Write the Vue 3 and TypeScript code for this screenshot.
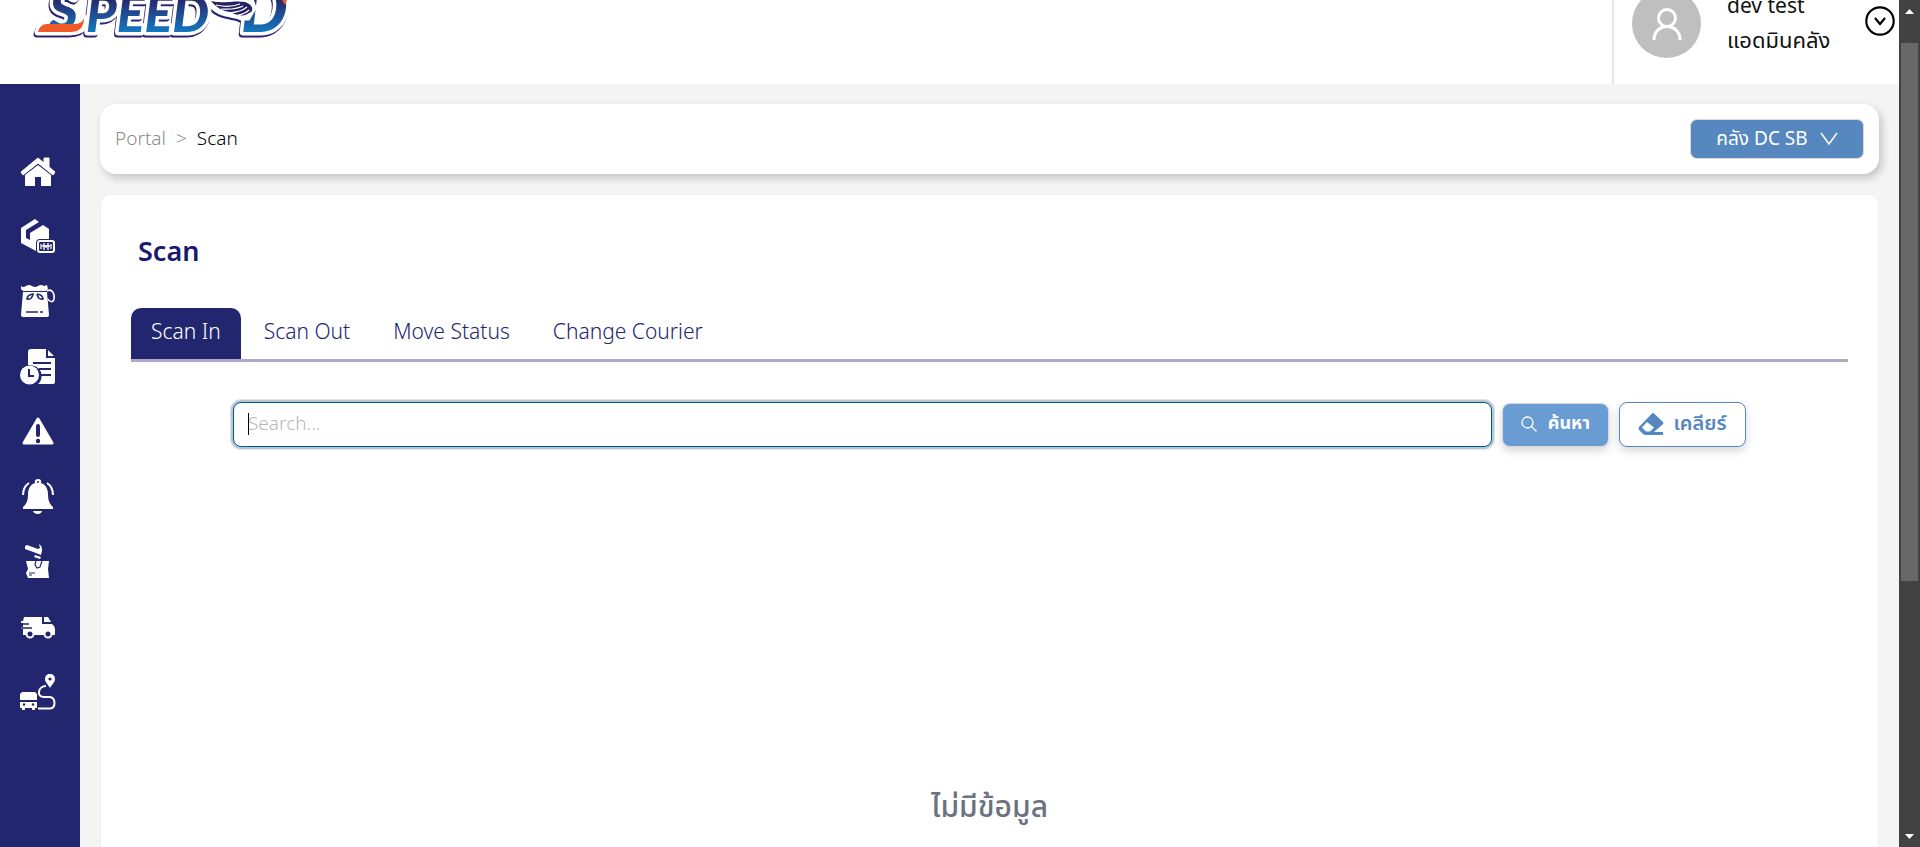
<script setup lang="ts">
import { onMounted, ref } from 'vue'

const tabs: string[] = ['Scan In', 'Scan Out', 'Move Status', 'Change Courier']
const activeTab = ref<string>('Scan In')
const keyword = ref<string>('')
const searchBox = ref<HTMLInputElement | null>(null)

const menu: string[] = ['home', 'parcel', 'bag', 'history', 'warning', 'bell', 'damaged', 'van', 'route']

function clearSearch(): void {
  keyword.value = ''
  searchBox.value?.focus()
}

onMounted(() => searchBox.value?.focus())
</script>

<template>
  <div class="window">
    <div class="page">
      <header class="header">
        <a href="#" class="logo" aria-label="Speed D">
          <svg width="270" height="84" viewBox="0 0 270 84">
            <defs>
              <linearGradient id="ink" gradientUnits="userSpaceOnUse" x1="0" y1="-4" x2="0" y2="32">
                <stop offset="0" stop-color="#262262" />
                <stop offset="0.45" stop-color="#21478f" />
                <stop offset="1" stop-color="#1279bf" />
              </linearGradient>
            </defs>
            <g class="logo-mark">
              <path d="M6 32Q8 24 15 24H42Q50 24 52 18L54 24Q50 32 38 32Z" fill="#fff" stroke="#fff" stroke-width="7" stroke-linejoin="round" />
              <text class="logo-word" y="32"><tspan class="logo-s" x="17" y="30">S</tspan><tspan x="54" y="32">PEED</tspan></text>
              <text class="logo-d" x="209" y="32">D</text>
              <path d="M178 2C184 17 205 14 209 18H216L222 8 218-4H176Z" fill="#fff" stroke="#fff" stroke-width="5" />
            </g>
            <path d="M6 32Q8 24 15 24H42Q50 24 52 18 52 32 38 32Z" fill="#f15a29" />
            <path d="M179 1C190 4 204 0 213 2 222 5 222 12 217 13 212 18 202 14 198 12 190 11 184 7 179 1Z" fill="#262262" />
            <path d="M184 5Q197 8 208 4M189 9Q203 10 211 6M197 13Q209 12 215 7M206 15Q213 14 217 10" fill="none" stroke="#fff" stroke-width="1.2" />
            <path d="M250 0H255L253 5Z" fill="#f15a29" />
          </svg>
        </a>
        <div class="profile">
          <span class="avatar">
            <svg width="34" height="34" viewBox="0 0 34 34" fill="none" stroke="#fff" stroke-width="3">
              <circle cx="17" cy="11" r="8.5" />
              <path d="M4 33C4 15 30 15 30 33" />
            </svg>
          </span>
          <div class="who">
            <div>dev test</div>
            <div class="role">แอดมินคลัง</div>
          </div>
          <button type="button" class="more" aria-label="Account menu">
            <svg width="30" height="30" viewBox="0 0 30 30" fill="none" stroke="#000" stroke-width="2.2">
              <circle cx="15" cy="15" r="13.7" />
              <path d="M10 12 15 18 20 12" />
            </svg>
          </button>
        </div>
      </header>

      <div class="body">
        <nav class="sidebar" aria-label="Main">
          <a v-for="item in menu" :key="item" href="#" :aria-label="item">
            <svg width="36" height="36" viewBox="0 0 36 36" fill="#fff">
              <g v-if="item === 'home'">
                <path d="M1 18 18 4 24 9V4H29V13L35 18 33 21 18 9 3 21Z" stroke="#fff" stroke-linejoin="round" />
                <path d="M5 21 18 11 31 21V32H21V23H15V32H5Z" />
              </g>
              <g v-else-if="item === 'parcel'">
                <path d="M1 9 15 0 19 3 6 11V19L10 21V14L23 6 29 10V20H20Q16 20 16 24V32L1 24Z" />
                <rect x="18" y="22" width="16" height="11" rx="2" fill="none" stroke="#fff" stroke-width="2" />
                <path d="M21 25V30M24 24V31M26 26V29M28 24V31M31 25V30M22 27H30" stroke="#fff" stroke-width="1.3" />
              </g>
              <g v-else-if="item === 'bag'">
                <path d="M1 2Q3 4 6 2 9 0 12 2 15 4 18 2 21 0 24 2L27 1 28 5 26 7H3L1 5ZM3 8H27L29 31Q29 33 26 33H3Q1 33 1 31Z" />
                <path d="M13 10Q7 11 7 15 12 16 13 10ZM17 10Q23 11 23 15 18 16 17 10M6 28H18M20 28H23" fill="none" stroke="#22266e" stroke-width="1.6" />
                <path d="M27 7C32 4 35 10 34 15 33 19 29 18 28 15" fill="none" stroke="#fff" stroke-width="1.5" />
              </g>
              <g v-else-if="item === 'history'">
                <path d="M11 0H26V9H35V33Q35 35 32 35H18Q23 31 21 23 18 16 8 16V3Q8 0 11 0ZM28 1 34 7H28Z" />
                <path d="M13 14H31M19 20H31M20 26H31" fill="none" stroke="#22266e" stroke-width="1.8" />
                <circle cx="9.500" cy="26" r="9.500" />
                <path d="M9 20V27H14" fill="none" stroke="#22266e" stroke-width="2" />
              </g>
              <g v-else-if="item === 'warning'">
                <path d="M18 5 32 29H4Z" stroke="#fff" stroke-width="3" stroke-linejoin="round" />
                <path d="M18 12V21" stroke="#22266e" stroke-width="4" stroke-linecap="round" />
                <circle cx="18" cy="27" r="2.200" fill="#22266e" />
              </g>
              <g v-else-if="item === 'bell'">
                <path d="M15 4Q14 0 18 0 22 0 21 4 28 6 28 16 28 24 33 28V30H3V28Q8 24 8 16 8 6 15 4ZM13 32H22Q21 35 18 35 14 35 13 32Z" />
                <circle cx="18" cy="3" r="1" fill="#22266e" />
                <path d="M9 4Q3 8 3 16M27 4Q33 8 33 16" fill="none" stroke="#fff" stroke-width="2" />
              </g>
              <g v-else-if="item === 'damaged'">
                <path d="M5 2 7 1 18 5 20 4 19 0Q24 3 21 11L16 9 5 5ZM15 11 21 13 20 15 14 13Z" />
                <path d="M6 17H29L28 25 29 34H8L6 29 8 25Z" />
                <path d="M16 17 15 21 17 24 20 23 22 17M9 29H15M9 31H12" fill="none" stroke="#22266e" stroke-width="1.2" />
              </g>
              <g v-else-if="item === 'van'">
                <path d="M4 8H22V15H32Q35 17 35 20V26H3V20H1V18H3V14H1V12H3ZM24 8H28L31 13H24Z" />
                <path d="M0 15H9M0 19H12" stroke="#22266e" stroke-width="1.600" />
                <circle cx="10" cy="25" r="3.500" fill="#22266e" stroke="#fff" stroke-width="2" />
                <circle cx="28" cy="25" r="3.500" fill="#22266e" stroke="#fff" stroke-width="2" />
              </g>
              <g v-else>
                <path d="M2 18H15L17 20V26H0V20ZM0 28H17V34H15V36H12V34H5V36H2V34H0Z" />
                <circle cx="4" cy="30.500" r="1.200" fill="#22266e" />
                <circle cx="13" cy="30.500" r="1.200" fill="#22266e" />
                <path d="M26 12C18 12 16 23 24 23H30C36 24 36 34 30 34.500H18" fill="none" stroke="#fff" stroke-width="2" />
                <path d="M30 14C27 9 25 8 25 5 25-2 35-2 35 5 35 8 33 9 30 14Z" />
                <circle cx="30" cy="5" r="1.600" fill="#22266e" />
              </g>
            </svg>
          </a>
        </nav>

        <main class="main">
          <section class="topbar">
            <nav class="crumbs" aria-label="Breadcrumb">
              <a href="#">Portal</a>
              <span class="sep">&gt;</span>
              <span>Scan</span>
            </nav>
            <button type="button" class="warehouse">
              <span>คลัง DC SB</span>
              <svg width="18" height="14" viewBox="0 0 18 14" fill="none" stroke="#fff" stroke-width="1.5">
                <path d="M1 1 9 12 17 1" />
              </svg>
            </button>
          </section>

          <section class="card">
            <h1>Scan</h1>
            <div class="tabs" role="tablist">
              <button
                v-for="tab in tabs"
                :key="tab"
                type="button"
                role="tab"
                class="tab"
                :class="{ active: tab === activeTab }"
                :aria-selected="tab === activeTab"
                @click="activeTab = tab"
              >{{ tab }}</button>
            </div>
            <form class="search" @submit.prevent>
              <div class="field" :class="{ blank: !keyword }">
                <input ref="searchBox" v-model="keyword" type="text" placeholder="Search..." aria-label="Search" />
              </div>
              <button type="submit" class="find">
                <svg width="16" height="16" viewBox="0 0 16 16" fill="none" stroke="#fff" stroke-width="1.300">
                  <circle cx="6.500" cy="6.500" r="5.500" />
                  <path d="M10.500 10.500 15.500 15.500" />
                </svg>
                <span>ค้นหา</span>
              </button>
              <button type="button" class="clear" @click="clearSearch">
                <svg width="26" height="24" viewBox="0 0 26 24">
                  <path d="M14 1.500Q15 .500 16 1.500L25 10Q26 11 25 12L16 20H25V23H8Q6 23 5 22L1 18Q0 16 1 15ZM9 10 4 15.500 8 19.500H12L16 15.500Z" fill="#5687be" fill-rule="evenodd" />
                </svg>
                <span>เคลียร์</span>
              </button>
            </form>
            <p class="empty">ไม่มีข้อมูล</p>
          </section>
        </main>
      </div>
    </div>

    <div class="scrollbar" aria-hidden="true">
      <svg width="9" height="5" viewBox="0 0 9 5" fill="#fff"><path d="M0 5 4.500 0 9 5Z" /></svg>
      <div class="track"><div class="thumb"></div></div>
      <svg width="9" height="5" viewBox="0 0 9 5" fill="#fff"><path d="M0 0H9L4.500 5Z" /></svg>
    </div>
  </div>
</template>

<style>
body {
  background: #f4f4f4;
}
</style>

<style scoped>
* {
  box-sizing: border-box;
}
.window {
  display: flex;
  height: 100vh;
  overflow: hidden;
  font-family: "Noto Sans", "Noto Sans Thai", sans-serif;
  color: #111;
}
button,
input {
  font: inherit;
}
button {
  cursor: pointer;
}
.page {
  flex: 1;
  min-width: 0;
  display: flex;
  flex-direction: column;
}
.header {
  flex: none;
  display: flex;
  justify-content: space-between;
  align-items: flex-end;
  height: 84px;
  overflow: hidden;
  background: #fff;
}
.logo {
  display: block;
  height: 84px;
  padding-left: 32px;
}
.logo svg {
  display: block;
}
.logo-mark {
  filter: drop-shadow(-1px 2px 0 #2a2470);
}
.logo text {
  font-family: Lato, sans-serif;
  font-weight: 900;
  font-style: italic;
  fill: url(#ink);
  stroke: #fff;
  stroke-width: 7px;
  stroke-linejoin: round;
  paint-order: stroke;
}
.logo-word {
  font-size: 52px;
}
.logo-s {
  font-size: 56px;
}
.logo-d {
  font-size: 66px;
}
.profile {
  display: flex;
  align-items: flex-end;
  height: 120px;
  padding: 0 4px 26px 18px;
  border-left: 2px solid #e5e5ee;
}
.avatar {
  display: flex;
  align-items: center;
  justify-content: center;
  width: 69px;
  height: 69px;
  border-radius: 50%;
  background: #bfbfbf;
}
.who {
  width: 138px;
  margin-left: 26px;
  padding-bottom: 2px;
  font-size: 21px;
  line-height: 34px;
}
.role {
  font-size: 22px;
}
.more {
  display: flex;
  margin-bottom: 22px;
  padding: 0;
  border: 0;
  background: none;
}
.body {
  flex: 1;
  display: flex;
  min-height: 0;
}
.sidebar {
  flex: none;
  display: flex;
  flex-direction: column;
  gap: 29px;
  width: 80px;
  padding: 70px 0 0 20px;
  background: #22266e;
}
.sidebar a,
.sidebar svg {
  display: block;
}
.main {
  flex: 1;
  min-width: 0;
  display: flex;
  flex-direction: column;
  gap: 20px;
  padding: 20px 20px 0;
  background: #f4f4f4;
}
.topbar {
  flex: none;
  display: flex;
  align-items: center;
  justify-content: space-between;
  height: 70px;
  padding: 0 15px;
  border-radius: 16px;
  background: #fff;
  box-shadow: 3px 4px 8px rgba(0, 0, 0, 0.2);
}
.crumbs {
  display: flex;
  gap: 10px;
  padding-bottom: 2px;
  font-size: 19px;
  font-weight: 300;
}
.crumbs span {
  color: #000;
}
.crumbs a,
.crumbs .sep {
  color: #8c8c8c;
  text-decoration: none;
}
.warehouse {
  display: flex;
  align-items: center;
  justify-content: center;
  gap: 12px;
  width: 174px;
  height: 40px;
  padding: 0;
  border: 1px solid #d9d9d9;
  border-radius: 7px;
  background: #5687be;
  color: #fff;
  font-size: 19px;
}
.card {
  flex: 1;
  padding: 34px 30px 0;
  border: 1px solid #eee;
  border-bottom: 0;
  border-radius: 10px 10px 0 0;
  background: #fff;
}
h1 {
  margin: 0 0 35px 7px;
  font-size: 27px;
  font-weight: 600;
  line-height: 44px;
  color: #191970;
}
.tabs {
  display: flex;
  gap: 3px;
  border-bottom: 3px solid #aca9c9;
}
.tab {
  height: 51px;
  padding: 0 20px 6px;
  border: 0;
  border-radius: 10px 10px 0 0;
  background: none;
  color: #22266e;
  font-size: 21px;
  font-weight: 300;
}
.tab.active {
  background: #22266e;
  color: #fff;
}
.search {
  display: flex;
  align-items: center;
  gap: 10px;
  padding: 40px 102px 0;
}
.field {
  position: relative;
  flex: 1;
  min-width: 0;
}
.field.blank:focus-within::after {
  content: "";
  position: absolute;
  top: 11px;
  left: 15px;
  width: 1px;
  height: 22px;
  background: #000;
}
.field.blank input {
  caret-color: transparent;
}
.search input {
  display: block;
  width: 100%;
  height: 45px;
  padding: 0 14px 4px;
  border: 1px solid #005596;
  border-radius: 8px;
  outline: 0;
  box-shadow: 0 0 0 2px #b7c7ce, 0 0 0 3px #dce4e8;
  background: #fff;
  font-size: 19px;
  font-weight: 300;
}
.search input::placeholder {
  color: #b8b8b8;
  opacity: 1;
}
.search button {
  display: flex;
  align-items: center;
  justify-content: center;
  padding: 0 0 2px;
  border-radius: 8px;
  font-weight: 700;
  box-shadow: 0 4px 10px rgba(0, 0, 0, 0.16);
}
.search .find {
  gap: 11px;
  width: 107px;
  height: 44px;
  border: 1px solid #d9d9d9;
  background: #689cd2;
  color: #fff;
  font-size: 18px;
}
.search .clear {
  gap: 9px;
  width: 127px;
  height: 45px;
  border: 1px solid #5687be;
  background: #fff;
  color: #5687be;
  font-size: 20px;
  font-weight: 600;
}
.empty {
  margin: 335px 0 0;
  color: #6b7280;
  font-size: 30px;
  font-weight: 500;
  line-height: 48px;
  text-align: center;
}
.scrollbar {
  flex: none;
  display: flex;
  flex-direction: column;
  align-items: center;
  width: 21px;
  padding: 9px 2px 8px;
  background: #424242;
}
.scrollbar svg {
  flex: none;
}
.track {
  flex: 1;
  align-self: stretch;
  padding: 29px 0 0;
}
.thumb {
  height: 68%;
  background: #686868;
}
</style>
